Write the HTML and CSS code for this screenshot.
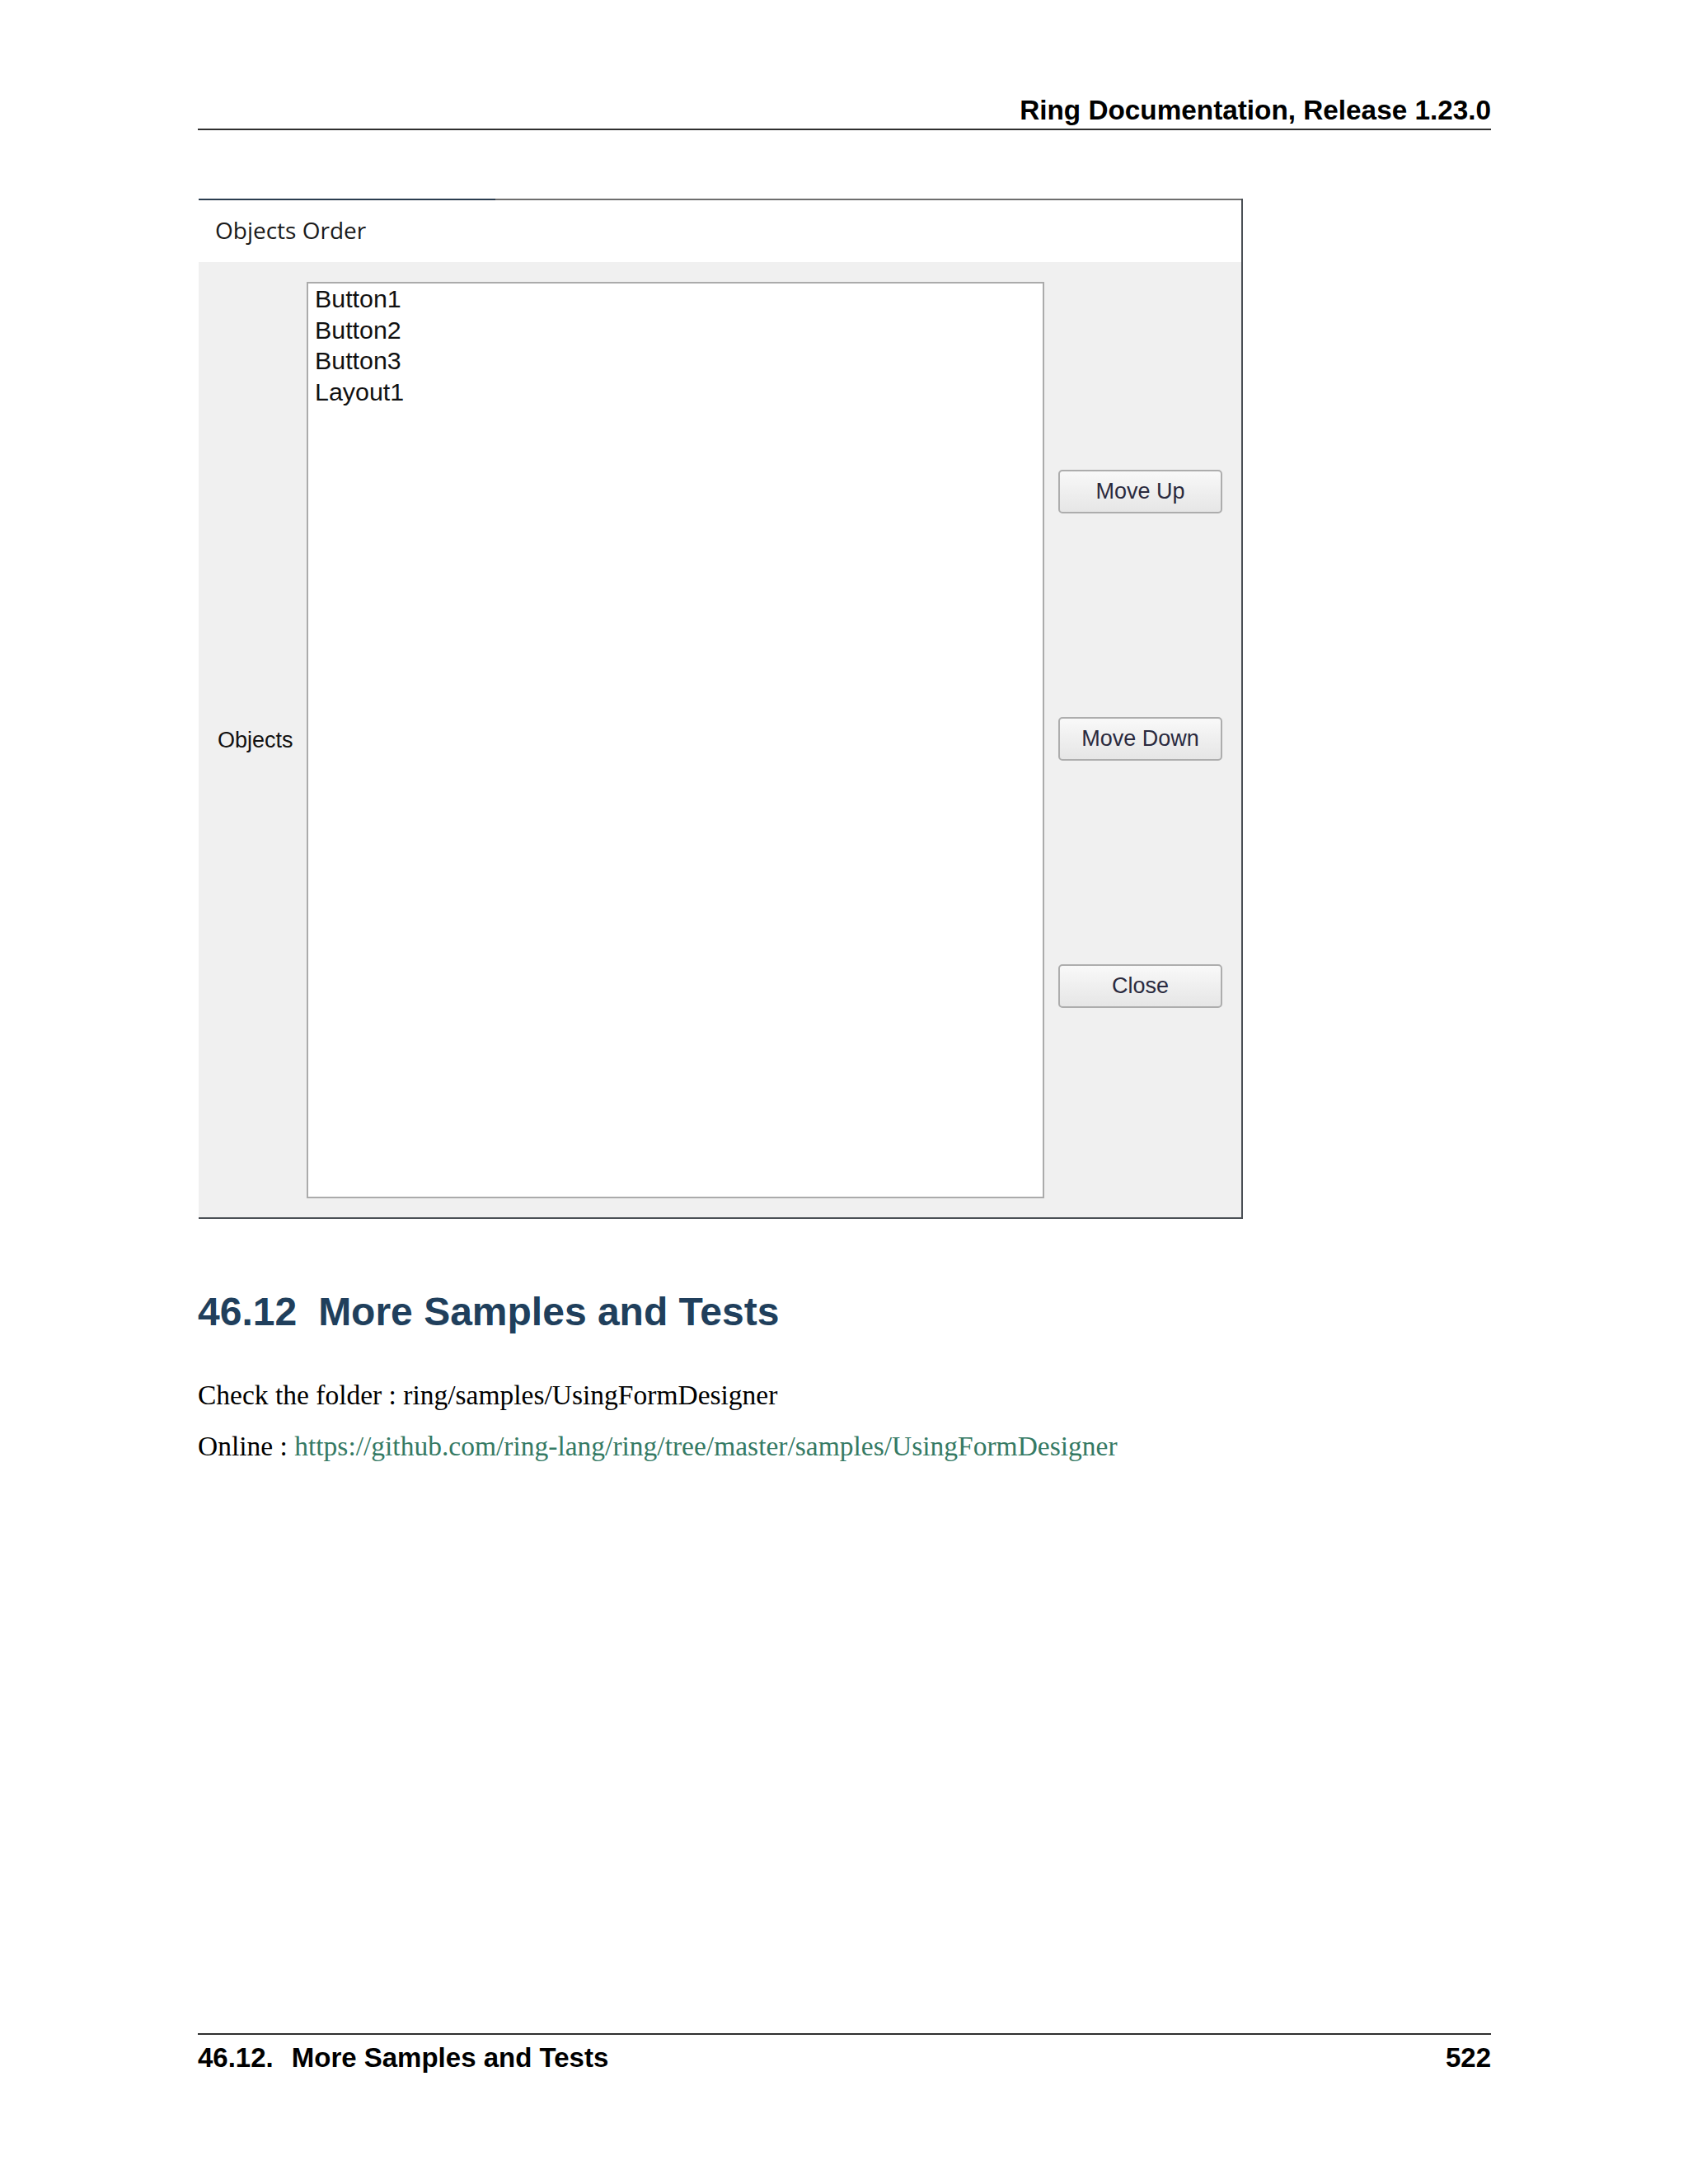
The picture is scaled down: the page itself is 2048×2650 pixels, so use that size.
FILE: index.html
```html
<!DOCTYPE html>
<html lang="en">
<head>
<meta charset="utf-8">
<title>Ring Documentation, Release 1.23.0</title>
<link rel="stylesheet" href="styles.css">
</head>
<body>
<div class="page">
  <header class="doc-header">Ring Documentation, Release 1.23.0</header>

  <div class="dialog">
    <div class="dialog-title">Objects Order</div>
    <div class="dialog-body">
      <div class="label">Objects</div>
      <div class="listbox">
        <div class="item">Button1</div>
        <div class="item">Button2</div>
        <div class="item">Button3</div>
        <div class="item">Layout1</div>
      </div>
      <div class="buttons">
        <div class="btn">Move Up</div>
        <div class="btn">Move Down</div>
        <div class="btn">Close</div>
      </div>
    </div>
  </div>

  <h2 class="section-title"><span class="num">46.12</span>More Samples and Tests</h2>
  <p class="para first">Check the folder : ring/samples/UsingFormDesigner</p>
  <p class="para second">Online : <a class="link" href="#">https://github.com/ring-lang/ring/tree/master/samples/UsingFormDesigner</a></p>

  <footer class="doc-footer">
    <span><span class="fnum">46.12.</span>More Samples and Tests</span>
    <span>522</span>
  </footer>
</div>
</body>
</html>
```
FILE: styles.css
```css
html, body {
  margin: 0;
  padding: 0;
  background: #ffffff;
}

.page {
  box-sizing: border-box;
  height: 2650px;
  width: 2048px;
  padding: 0 239px 135px 240px;
  display: flex;
  flex-direction: column;
  font-family: "Liberation Sans", Arial, sans-serif;
  color: #000;
}

.doc-header {
  padding-top: 115px;
  padding-bottom: 4px;
  font-weight: bold;
  font-size: 33.3px;
  line-height: 37px;
  text-align: right;
  border-bottom: 2px solid #2f2f2f;
}

.dialog {
  margin-top: 83px;
  margin-left: 1px;
  width: 1265px;
  border-right: 2px solid #4a4f55;
  border-bottom: 2px solid #4a4f55;
}

.dialog-title {
  padding: 19px 0 20px 20px;
  background:
    linear-gradient(to right, #2b3d4f 0, #2b3d4f 360px, #6e6e6e 360px) top left / 100% 2px no-repeat,
    #ffffff;
  font-family: "Open Sans", "Noto Sans", sans-serif;
  font-size: 28px;
  line-height: 38px;
  color: #1a1a1a;
}

.dialog-body {
  background: #f0f0f0;
  padding: 24px 23px 23px 0;
  display: grid;
  grid-template-columns: 131px 895px 216px;
}

.label {
  align-self: center;
  padding-left: 23px;
  font-size: 27px;
  color: #111;
}

.listbox {
  box-sizing: border-box;
  height: 1112px;
  background: #ffffff;
  border: 2px solid #ababab;
  padding: 0 8px;
  font-size: 30.4px;
  line-height: 37.7px;
  color: #111;
}

.buttons {
  padding-left: 17px;
  display: flex;
  flex-direction: column;
  gap: 247px;
  padding-top: 228px;
}

.btn {
  box-sizing: border-box;
  height: 53px;
  border: 2px solid #adadad;
  border-radius: 5px;
  background: linear-gradient(to bottom, #f9f9f9 0%, #efefef 50%, #e6e6e6 100%);
  display: flex;
  align-items: center;
  justify-content: center;
  font-size: 27px;
  color: #2a2a3e;
}

.section-title {
  margin: 85px 0 0 0;
  font-size: 48px;
  line-height: 56px;
  font-weight: bold;
  color: #203f5c;
}

.section-title .num {
  margin-right: 26px;
}

.para {
  margin: 0;
  font-family: "Liberation Serif", "Times New Roman", serif;
  font-size: 33.5px;
  line-height: 40px;
}

.para.first {
  margin-top: 53px;
}

.para.second {
  margin-top: 22px;
}

.link {
  color: #357a64;
  text-decoration: none;
}

.doc-footer {
  margin-top: auto;
  border-top: 2px solid #2f2f2f;
  padding-top: 9px;
  display: flex;
  justify-content: space-between;
  font-weight: bold;
  font-size: 33px;
  line-height: 37px;
}

.doc-footer .fnum {
  margin-right: 22px;
}
```
